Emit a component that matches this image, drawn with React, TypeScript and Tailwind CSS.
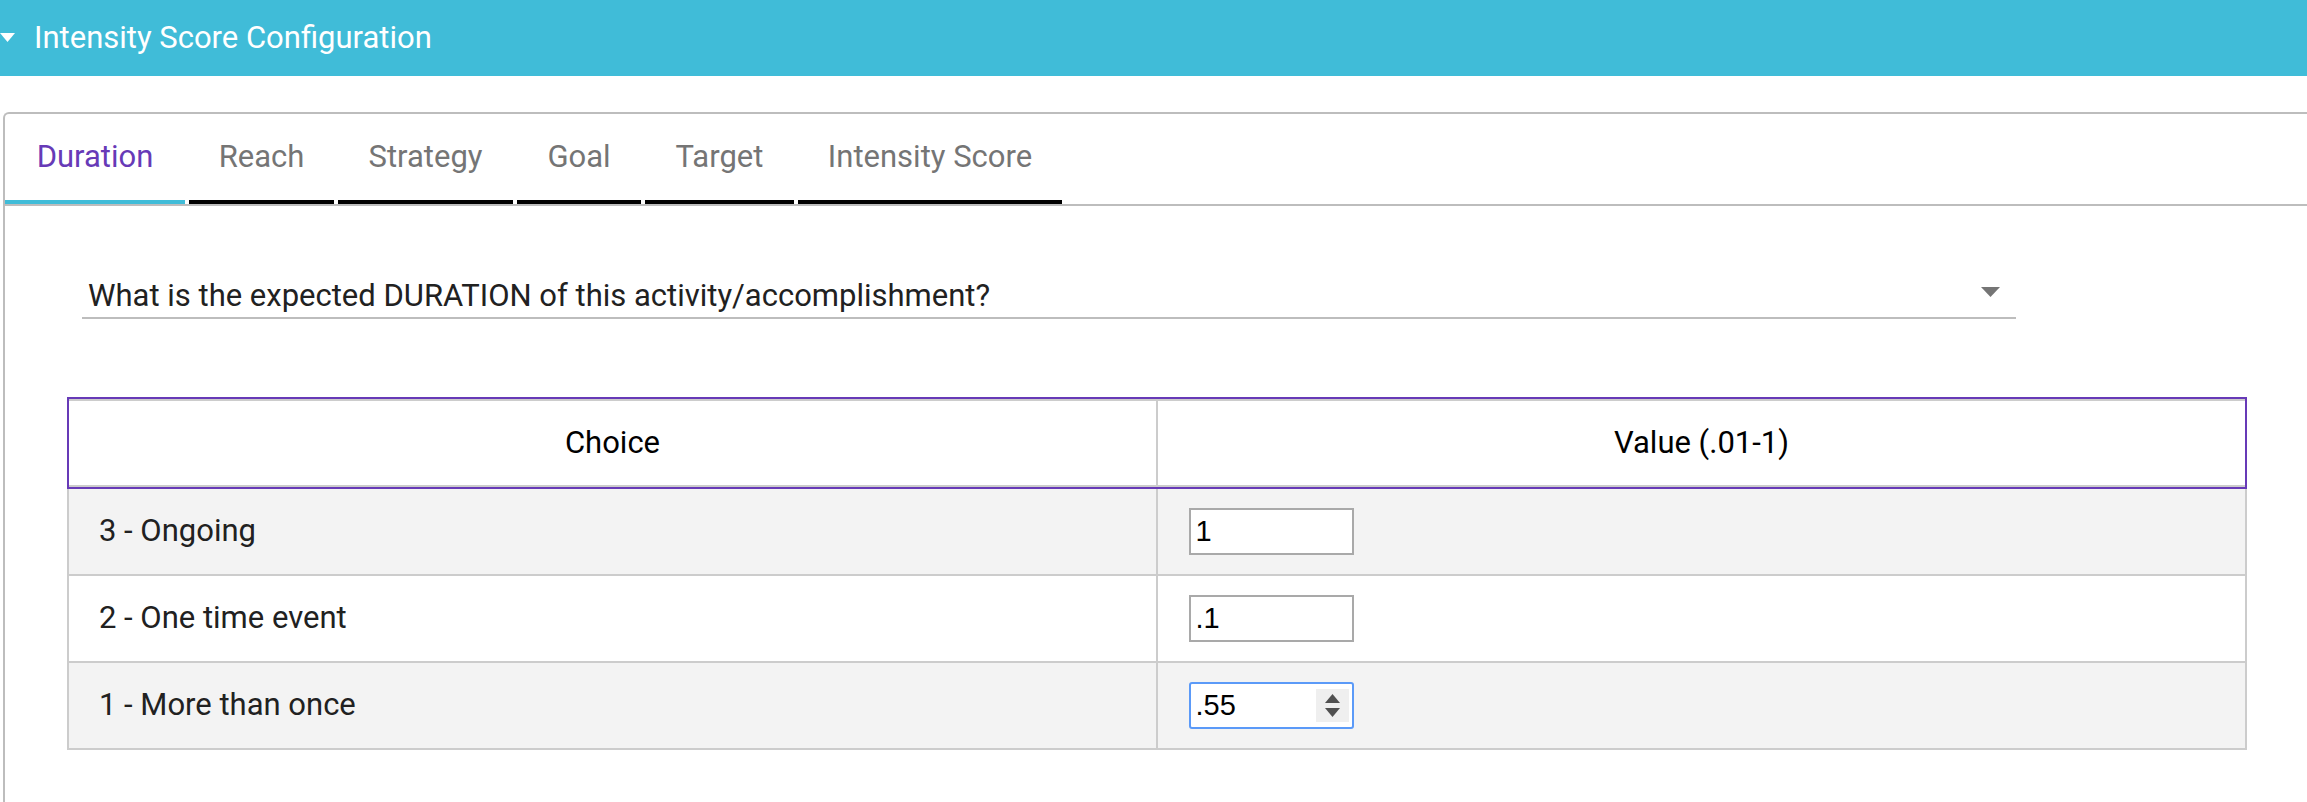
import React from "react";

const tabs = [
  { label: "Duration", w: "w-[180px]", active: true },
  { label: "Reach", w: "w-[145px]" },
  { label: "Strategy", w: "w-[175px]" },
  { label: "Goal", w: "w-[124px]" },
  { label: "Target", w: "w-[149px]" },
  { label: "Intensity Score", w: "w-[264px]" },
];

const rows = [
  { choice: "3 - Ongoing", value: "1", bg: "bg-[#f3f3f3]" },
  { choice: "2 - One time event", value: ".1", bg: "bg-white" },
  { choice: "1 - More than once", value: ".55", bg: "bg-[#f3f3f3]", focus: true },
];

export default function App() {
  return (
    <div className="w-[2307px] h-[802px] overflow-hidden bg-white font-['Roboto',sans-serif]">
      {/* Header bar */}
      <div className="h-[76px] bg-[#40bcd8] flex items-center">
        <svg width="15" height="9" viewBox="0 0 15 9" className="shrink-0 -mt-[2px]">
          <polygon points="0,0 15,0 7.5,9" fill="#ffffff" />
        </svg>
        <span className="ml-[19px] -mt-[2px] text-white text-[31px] leading-none">Intensity Score Configuration</span>
      </div>

      <div className="pt-[36px] pl-[3px]">
        <div className="h-[700px] border-t-2 border-l-2 border-[#bdbdbd] rounded-tl-[6px]">
          {/* Tabs */}
          <div className="flex gap-[4px] border-b-2 border-[#bdbdbd]">
            {tabs.map((t) => (
              <div
                key={t.label}
                className={`${t.w} h-[90px] flex items-center justify-center border-b-4 text-[31px] ${
                  t.active ? "border-[#40bcd8] text-[#673ab7]" : "border-black text-[#757575]"
                }`}
              >
                {t.label}
              </div>
            ))}
          </div>

          {/* Select */}
          <div className="ml-[77px] mt-[64px] w-[1934px] h-[49px] pt-[5px] pr-[16px] pl-[6px] flex items-center justify-between border-b-2 border-[#bdbdbd]">
            <span className="text-[31px] text-[#212121]">What is the expected DURATION of this activity/accomplishment?</span>
            <svg width="19" height="10" viewBox="0 0 19 10" className="shrink-0 -mt-[8px]">
              <polygon points="0,0 19,0 9.5,10" fill="#757575" />
            </svg>
          </div>

          {/* Table */}
          <div className="ml-[62px] mt-[78px] w-[2180px] text-[31px] text-[#212121]">
            <div className="flex border-2 border-[#673ab7]">
              <div className="flex flex-1 h-[88px] border-y-2 border-[#cccccc]">
                <div className="flex-1 flex items-center justify-center border-r-2 border-[#cccccc] text-black">Choice</div>
                <div className="flex-1 flex items-center justify-center text-black">Value (.01-1)</div>
              </div>
            </div>
            {rows.map((r) => (
              <div key={r.choice} className={`flex h-[87px] border-x-2 border-b-2 border-[#cccccc] ${r.bg}`}>
                <div className="flex-1 flex items-center pl-[30px] border-r-2 border-[#cccccc]">{r.choice}</div>
                <div className="flex-1 flex items-center pl-[31px]">
                  <div
                    className={`relative w-[165px] h-[47px] bg-white flex items-center ${
                      r.focus ? "border-2 border-[#5b9af8] rounded-[3px]" : "border-2 border-[#a9a9a9]"
                    }`}
                  >
                    <input
                      readOnly
                      value={r.value}
                      className="w-full h-full pl-[5px] outline-none bg-transparent text-[29px] text-black font-['Liberation_Sans',Arial,sans-serif]"
                    />
                    {r.focus && (
                      <div className="absolute right-[3px] top-[5px] w-[33px] h-[33px] bg-[#efefef] flex flex-col items-center justify-center gap-[5px]">
                        <svg width="15" height="9" viewBox="0 0 15 9">
                          <polygon points="7.5,0 15,9 0,9" fill="#505050" />
                        </svg>
                        <svg width="15" height="9" viewBox="0 0 15 9">
                          <polygon points="0,0 15,0 7.5,9" fill="#505050" />
                        </svg>
                      </div>
                    )}
                  </div>
                </div>
              </div>
            ))}
          </div>
        </div>
      </div>
    </div>
  );
}
